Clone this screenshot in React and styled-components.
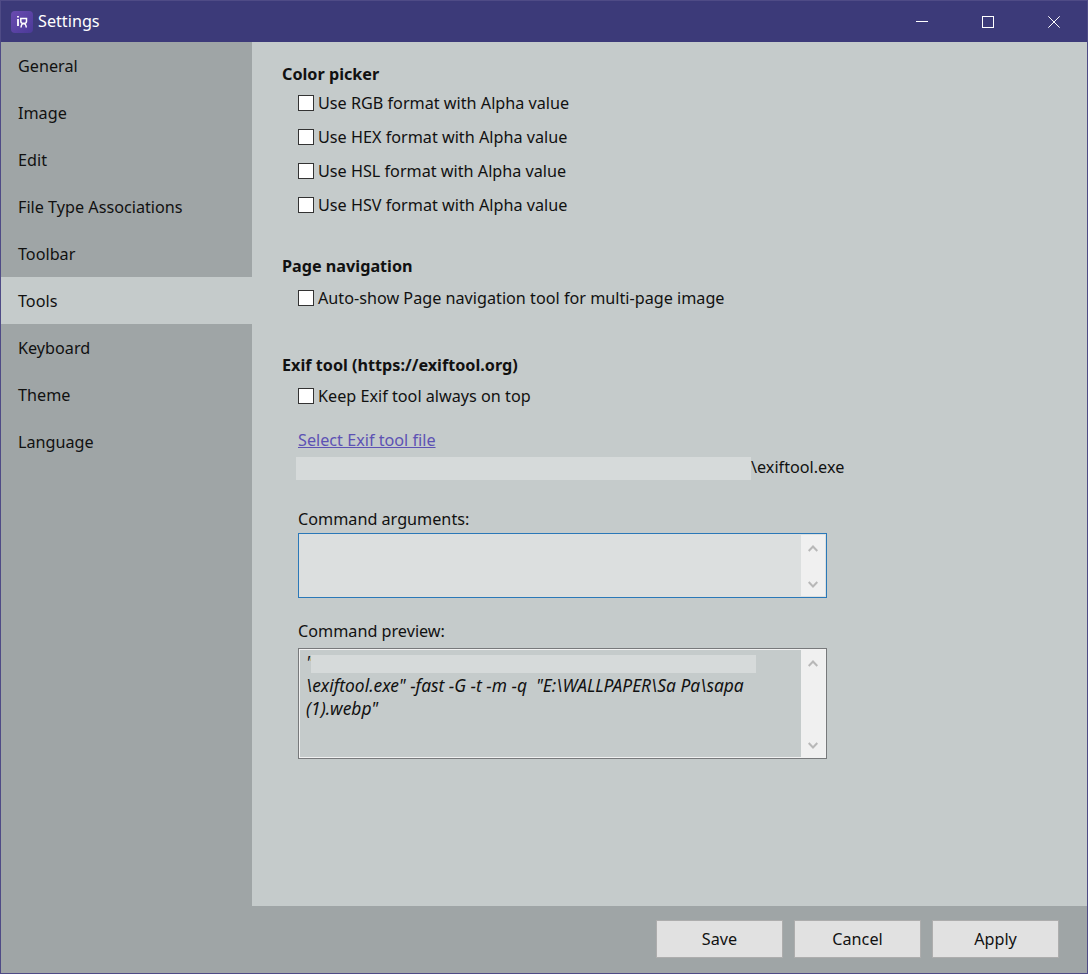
import styled, { createGlobalStyle } from "styled-components";
import { useState } from "react";

const GlobalStyle = createGlobalStyle`
  html, body {
    margin: 0;
    padding: 0;
    background: #c5cbcb;
  }
  body {
    font-family: "Noto Sans", "Open Sans", sans-serif;
    font-size: 16.2px;
    color: #111;
  }
`

const menuItems = ["General", "Image", "Edit", "File Type Associations", "Toolbar", "Tools", "Keyboard", "Theme", "Language"];
const colorFormats = ["RGB", "HEX", "HSL", "HSV"];

const ArrowUp = () => (
  <svg width="10" height="7" viewBox="0 0 10 7" fill="none" stroke="currentColor" strokeWidth="2">
    <path d="M.7 6L5 1.500 9.300 6" />
  </svg>
)
const ArrowDown = () => (
  <svg width="10" height="7" viewBox="0 0 10 7" fill="none" stroke="currentColor" strokeWidth="2">
    <path d="M.7 1L5 5.500 9.300 1" />
  </svg>
)

const Logo = () => (
  <svg width="22" height="22" viewBox="0 0 22 22">
    <defs>
      <linearGradient id="logoBg" x1="0" y1="0" x2="1" y2="1">
        <stop offset="0" stopColor="#6a4bb0" />
        <stop offset="1" stopColor="#4b3a98" />
      </linearGradient>
    </defs>
    <rect width="22" height="22" rx="4" fill="url(#logoBg)" />
    <path d="M7 5v1.500M7 8v7" stroke="#fff" strokeWidth="1.800" fill="none" />
    <path d="M9.800 7.500h5.700v2.700c0 1.500-1.200 2.300-2.850 2.300s-2.850-.8-2.850-2.300z" stroke="#fff" strokeWidth="1.500" fill="none" />
    <path d="M10 16.500c.2-2 1.100-4 2.650-4s2.450 2 2.650 4" stroke="#fff" strokeWidth="1.500" fill="none" />
  </svg>
)

const App = () => {
  const [active, setActive] = useState("Tools");

  return (
    <Window>
      <GlobalStyle />
      <TitleBar>
        <TitleLeft>
          <Logo />
          <Title>Settings</Title>
        </TitleLeft>
        <WindowButtons>
          <WindowButton>
            <svg width="12" height="12" viewBox="0 0 12 12" fill="none" stroke="#fff" strokeWidth="1">
              <path d="M0 5.500h12" />
            </svg>
          </WindowButton>
          <WindowButton>
            <svg width="12" height="12" viewBox="0 0 12 12" fill="none" stroke="#fff" strokeWidth="1">
              <rect x=".5" y=".5" width="11" height="11" />
            </svg>
          </WindowButton>
          <WindowButton>
            <svg width="12" height="12" viewBox="0 0 12 12" fill="none" stroke="#fff" strokeWidth="1">
              <path d="M.3.3l11.400 11.400M11.700.3L.3 11.700" />
            </svg>
          </WindowButton>
        </WindowButtons>
      </TitleBar>

      <Body>
        <Sidebar>
          {menuItems.map(item => (
            <MenuItem key={item} $active={item === active} onClick={() => setActive(item)}>
              {item}
            </MenuItem>
          ))}
        </Sidebar>

        <Content>
          <Section>
            <SectionTitle>Color picker</SectionTitle>
            <CheckList>
              {colorFormats.map(f => (
                <CheckRow key={f}>
                  <CheckBox type="checkbox" />
                  Use {f} format with Alpha value
                </CheckRow>
              ))}
            </CheckList>
          </Section>

          <Section $top={32}>
            <SectionTitle>Page navigation</SectionTitle>
            <CheckList $top={3}>
              <CheckRow>
                <CheckBox type="checkbox" />
                Auto-show Page navigation tool for multi-page image
              </CheckRow>
            </CheckList>
          </Section>

          <Section $top={38}>
            <SectionTitle>Exif tool (https://exiftool.org)</SectionTitle>
            <CheckList $top={2}>
              <CheckRow>
                <CheckBox type="checkbox" />
                Keep Exif tool always on top
              </CheckRow>
            </CheckList>
            <FileLink href="#">Select Exif tool file</FileLink>
            <PathRow>
              <Redacted />
              <PathText>\exiftool.exe</PathText>
            </PathRow>

            <FieldLabel $top={27}>Command arguments:</FieldLabel>
            <TextBox $focused $top={2} $height={65}>
              <TextArea />
              <ScrollBar>
                <ArrowUp />
                <ArrowDown />
              </ScrollBar>
            </TextBox>

            <FieldLabel $top={21}>Command preview:</FieldLabel>
            <TextBox $top={5} $height={111}>
              <PreviewText>
                <PreviewLine>"<RedactedInline /></PreviewLine>
                <PreviewLine>\exiftool.exe" -fast -G -t -m -q&nbsp; "E:\WALLPAPER\Sa Pa\sapa</PreviewLine>
                <PreviewLine>(1).webp"</PreviewLine>
              </PreviewText>
              <ScrollBar>
                <ArrowUp />
                <ArrowDown />
              </ScrollBar>
            </TextBox>
          </Section>
        </Content>
      </Body>

      <Footer>
        <FooterButton>Save</FooterButton>
        <FooterButton>Cancel</FooterButton>
        <FooterButton>Apply</FooterButton>
      </Footer>
    </Window>
  )
}
export default App

const Window = styled.div`
  width: 1088px;
  height: 974px;
  box-sizing: border-box;
  border: 1px solid #4f4b86;
  display: flex;
  flex-direction: column;
  overflow: hidden;
  background: #c5cbcb;
`
const TitleBar = styled.div`
  height: 41px;
  flex: none;
  background: #3c3a79;
  display: flex;
  align-items: center;
  justify-content: space-between;
`
const TitleLeft = styled.div`
  display: flex;
  align-items: center;
  gap: 5px;
  padding-left: 10px;
`
const Title = styled.span`
  color: #fff;
  margin-bottom: 2px;
`
const WindowButtons = styled.div`
  display: flex;
  height: 100%;
`
const WindowButton = styled.div`
  width: 66px;
  display: flex;
  align-items: center;
  justify-content: center;
`
const Body = styled.div`
  flex: 1;
  display: flex;
  min-height: 0;
`
const Sidebar = styled.nav`
  width: 251px;
  flex: none;
  background: #9fa5a6;
  display: flex;
  flex-direction: column;
`
const MenuItem = styled.div`
  height: 47px;
  padding-left: 17px;
  display: flex;
  align-items: center;
  box-sizing: border-box;
  background: ${props => props.$active ? "#c5cbcb" : "transparent"};
  cursor: pointer;
`
const Content = styled.main`
  flex: 1;
  padding: 20px 0 0 30px;
`
const Section = styled.section`
  display: flex;
  flex-direction: column;
  margin-top: ${props => props.$top || 0}px;
`
const SectionTitle = styled.div`
  font-weight: 700;
  line-height: 24px;
`
const CheckList = styled.div`
  display: flex;
  flex-direction: column;
  padding-left: 16px;
  margin-top: ${props => props.$top || 0}px;
`
const CheckRow = styled.label`
  height: 34px;
  display: flex;
  align-items: center;
  gap: 4px;
`
const CheckBox = styled.input`
  appearance: none;
  width: 16px;
  height: 16px;
  margin: 0;
  background: #fff;
  border: 1px solid #333;
  box-sizing: border-box;
`
const FileLink = styled.a`
  margin: 15px 0 0 16px;
  color: #5d52b4;
  line-height: 24px;
  align-self: flex-start;
`
const PathRow = styled.div`
  margin: 5px 0 0 14px;
  display: flex;
  align-items: center;
  height: 23px;
`
const Redacted = styled.div`
  width: 455px;
  height: 23px;
  background: #d6dada;
`
const PathText = styled.span`
  margin-bottom: 3px;
`
const FieldLabel = styled.div`
  margin: ${props => props.$top}px 0 0 16px;
  line-height: 24px;
`
const TextBox = styled.div`
  margin: ${props => props.$top}px 0 0 16px;
  width: 529px;
  height: ${props => props.$height}px;
  box-sizing: border-box;
  display: flex;
  border: 1px solid ${props => props.$focused ? "#2a78b8" : "#77797b"};
  box-shadow: ${props => props.$focused ? "none" : "inset 0 0 0 1px #f2f2f2"};
  background: ${props => props.$focused ? "#dcdfdf" : "#c5cbcb"};
`
const TextArea = styled.div`
  flex: 1;
`
const PreviewText = styled.div`
  flex: 1;
  padding: 2px 0 0 7px;
  font-style: italic;
  font-size: 17.4px;
  min-width: 0;
`
const PreviewLine = styled.div`
  height: 23px;
  line-height: 23px;
  white-space: nowrap;
  display: flex;
`
const RedactedInline = styled.span`
  width: 445px;
  height: 18px;
  margin: 4px 0 0 -2px;
  background: #d6dada;
`
const ScrollBar = styled.div`
  width: 24px;
  flex: none;
  background: #f0f0f0;
  color: #b8b8b8;
  display: flex;
  flex-direction: column;
  align-items: center;
  justify-content: space-between;
  padding: 10px 0 8px;
  box-sizing: border-box;
  margin: 1px 1px 1px 0;
`
const Footer = styled.footer`
  height: 67px;
  flex: none;
  background: #9fa5a6;
  display: flex;
  justify-content: flex-end;
  align-items: flex-start;
  gap: 11px;
  padding: 14px 28px 0 0;
  box-sizing: border-box;
`
const FooterButton = styled.button`
  width: 127px;
  height: 38px;
  background: #e1e1e1;
  border: 1px solid #adadad;
  font-family: inherit;
  font-size: 16.2px;
  color: #111;
  padding: 0;
`
